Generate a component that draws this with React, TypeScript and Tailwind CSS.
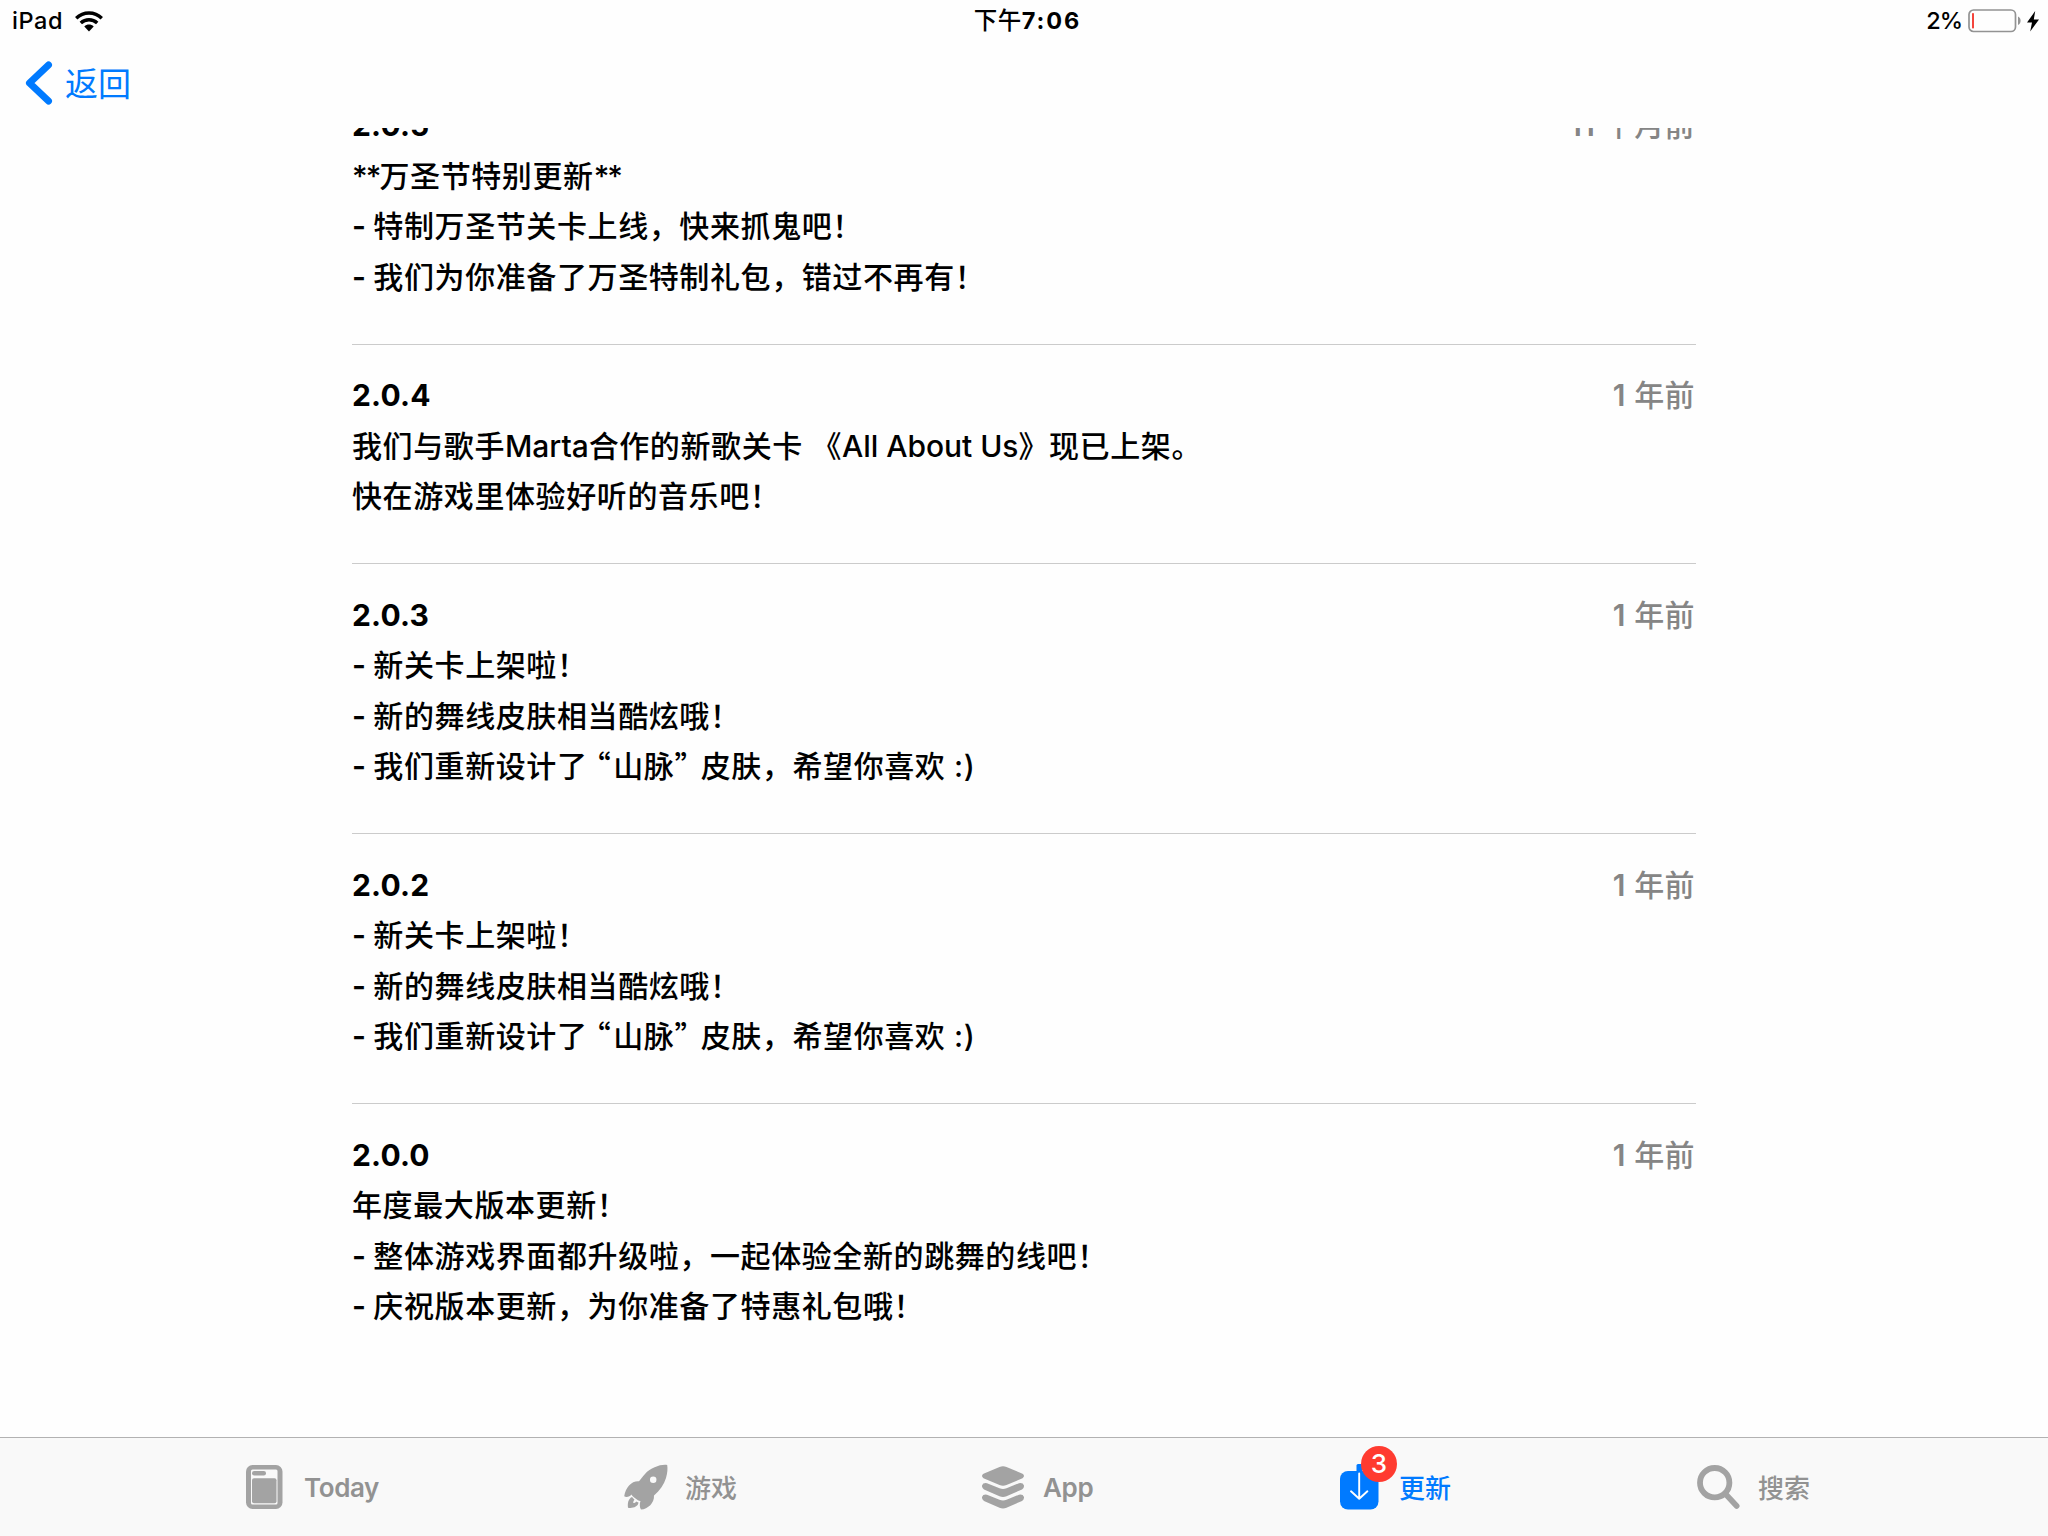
import React from "react";

type Entry = { version: string; age: string; lines: string[] };

const entries: Entry[] = [
  {
    version: "2.0.5",
    age: "11 个月前",
    lines: ["**万圣节特别更新**", "- 特制万圣节关卡上线，快来抓鬼吧！", "- 我们为你准备了万圣特制礼包，错过不再有！"],
  },
  {
    version: "2.0.4",
    age: "1 年前",
    lines: ["我们与歌手Marta合作的新歌关卡 《All About Us》现已上架。", "快在游戏里体验好听的音乐吧！"],
  },
  {
    version: "2.0.3",
    age: "1 年前",
    lines: ["- 新关卡上架啦！", "- 新的舞线皮肤相当酷炫哦！", "- 我们重新设计了 “山脉” 皮肤，希望你喜欢 :)"],
  },
  {
    version: "2.0.2",
    age: "1 年前",
    lines: ["- 新关卡上架啦！", "- 新的舞线皮肤相当酷炫哦！", "- 我们重新设计了 “山脉” 皮肤，希望你喜欢 :)"],
  },
  {
    version: "2.0.0",
    age: "1 年前",
    lines: ["年度最大版本更新！", "- 整体游戏界面都升级啦，一起体验全新的跳舞的线吧！", "- 庆祝版本更新，为你准备了特惠礼包哦！"],
  },
];

function WifiIcon() {
  return (
    <svg width="28" height="21" viewBox="0 0 28 21" fill="none" stroke="#000" strokeWidth="3.4">
      <path d="M1.2 7.2C8.4 .3 19.6 .3 26.8 7.2" />
      <path d="M5.8 12C10.4 7.6 17.6 7.6 22.2 12" />
      <path d="M14 20.4 9.3 15.4C12 13 16 13 18.700 15.4Z" fill="#000" stroke="none" />
    </svg>
  );
}

function StatusBar() {
  return (
    <div className="grid h-10 grid-cols-3 items-center pt-0.5 text-[23.500px] leading-none font-medium text-black">
      <div className="flex items-center pl-3">
        <span className="w-[63px] tracking-[0.6px]">iPad</span>
        <WifiIcon />
      </div>
      <div className="pl-[7px] text-center tracking-[0.5px]">
        下午<span className="font-bold tracking-[1.900px]">7:06</span>
      </div>
      <div className="flex items-center justify-end pr-[9px]">
        <span className="mr-[6px] tracking-[-1px]">2%</span>
        <svg width="54" height="24" viewBox="0 0 54 24" fill="none">
          <rect x="1" y="1" width="46.500" height="21.500" rx="4.500" stroke="#939393" strokeWidth="1.700" />
          <rect x="4" y="4" width="2" height="15.500" rx="0.8" fill="#f4453c" />
          <path d="M50 7.500c3.500 1.600 3.500 7 0 8.600Z" fill="#939393" />
        </svg>
        <svg className="ml-[5px]" width="12" height="21" viewBox="0 0 12 21">
          <path d="M8.200 0 0 11.500h5L3.200 20.500 12 8.600H6.800Z" fill="#000" />
        </svg>
      </div>
    </div>
  );
}

function NavBar() {
  return (
    <div className="flex h-[88px] items-start pt-[21px] pl-[25px] text-[#007aff]">
      <svg width="28" height="46" viewBox="0 0 28 46" fill="none" stroke="#007aff" strokeWidth="7" strokeLinecap="round" strokeLinejoin="round">
        <path d="M23.500 4 4.500 22 23.500 40" />
      </svg>
      <span className="mt-[5px] ml-3 text-[33px] leading-[36px]">返回</span>
    </div>
  );
}

/* Splits a line so that asterisks, dashes, quotes and Latin words get their own spacing. */
function Line({ text }: { text: string }) {
  const parts = text.split(/(\*\*|^- |[“”]|[A-Za-z]+(?: [A-Za-z]+)*)/).filter(Boolean);
  return (
    <p className="h-[50.500px] leading-[50.500px] tracking-[0.6px] whitespace-pre">
      {parts.map((part, i) => {
        if (part === "**") return <span key={i} className="tracking-[-1.900px]">{part}</span>;
        if (part === "- ") return <span key={i} className="font-semibold tracking-[-0.100px]">{part}</span>;
        if (part === "“") return <span key={i} lang="zh-CN" className="mr-[2px] -ml-[15.500px] font-['Noto_Sans_CJK_SC',sans-serif] leading-none">{part}</span>;
        if (part === "”") return <span key={i} lang="zh-CN" className="-mr-[13px] font-['Noto_Sans_CJK_SC',sans-serif] leading-none">{part}</span>;
        if (/^[A-Za-z]/.test(part)) return <span key={i} className="tracking-[-0.050px]">{part}</span>;
        return part;
      })}
    </p>
  );
}

function VersionEntry({ entry }: { entry: Entry }) {
  const [count, ...unit] = entry.age.split(" ");
  return (
    <section className="border-b border-[#cbcbcb] pt-[25.500px] pb-[41.500px] text-[30px] font-medium last:border-b-0">
      <div className="flex items-baseline justify-between leading-[50.500px]">
        <h2 className="font-bold tracking-[0.2px]">{entry.version}</h2>
        <span className="pr-px tracking-[0.4px] text-[#858585]">
          <span className="font-semibold">{count}</span> {unit}
        </span>
      </div>
      {entry.lines.map((line) => (
        <Line key={line} text={line} />
      ))}
    </section>
  );
}

function TodayIcon() {
  return (
    <svg width="37" height="44" viewBox="0 0 37 44">
      <rect width="36.500" height="44" rx="6.500" fill="#a3a3a3" />
      <rect x="5" y="4.500" width="26.500" height="35" rx="1.500" fill="#f9f9f9" />
      <rect x="6" y="6" width="14" height="4.500" rx="2.200" fill="#a3a3a3" />
      <rect x="6" y="13.300" width="24.500" height="25" rx="2" fill="#a3a3a3" />
    </svg>
  );
}

function RocketIcon() {
  return (
    <svg width="44" height="46" viewBox="0 0 44 46">
      <path
        fill="#a3a3a3"
        fillRule="evenodd"
        d="M43.200 1C37 0 27 3.500 21 10 18.500 12.800 16.500 15.500 15 17.200 8 16.500 1.500 23 .2 32.300 2.500 34 6 32.500 7.500 30.500 8 32 14.500 37.500 16.500 37 15.500 39.500 15.500 43.500 17 45.600 24 45 30.500 39 30 31.500 36 26.500 40 20.500 42 14 43.500 9 43.800 4.500 43.200 1ZM29.200 12.400a3.200 3.200 0 1 1 0 6.500 3.200 3.200 0 0 1 0-6.500Z"
      />
      <path fill="#a3a3a3" d="M8 33C4 35 3.500 39.500 4 43.700 8.500 44.500 14 43 14.500 38.500 13.500 38.300 12.800 38 12.200 37.500 11.500 38.800 10.500 39 9.300 39 9.300 37.500 9.500 36.700 10.500 35.800Z" />
    </svg>
  );
}

function StackIcon() {
  return (
    <svg width="43" height="43" viewBox="0 0 43 43" fill="#a3a3a3">
      <path d="M17.500.9Q21 -.5 24.500 .9L40.500 7.800Q43.500 10 40.500 12.200L24.500 19.100Q21 20.500 17.500 19.100L1.500 12.200Q-1.500 10 1.500 7.800Z" />
      <path d="M5 17.200 17.500 22.300Q21 23.700 24.500 22.300L37 17.200Q41 16.500 42 19.500 42.300 22 40 23.500L24.500 30.200Q21 31.600 17.500 30.200L2 23.500Q-.3 22 0 19.500 1 16.500 5 17.200Z" />
      <path d="M5 28.700 17.500 33.800Q21 35.200 24.500 33.800L37 28.700Q41 28 42 31 42.300 33.500 40 35L24.500 41.700Q21 43.100 17.500 41.700L2 35Q-.3 33.500 0 31 1 28 5 28.700Z" />
    </svg>
  );
}

function UpdateIcon() {
  return (
    <span className="relative block h-[46px] w-[39px]">
      <svg width="39" height="46" viewBox="0 0 39 46">
        <rect x="0" y="7" width="38.500" height="38.500" rx="8" fill="#007aff" />
        <path d="M16.500 8.500V1.500Q16.500 0 18 0H22V8.500Z" fill="#007aff" />
        <path d="M19.200 9.500V34.500M11 27.300 19.200 34.800 27.400 27.300" fill="none" stroke="#fff" strokeWidth="1.900" strokeLinecap="round" strokeLinejoin="round" />
      </svg>
      <span className="absolute -top-[18px] left-[21px] flex size-9 items-center justify-center rounded-full bg-[#ff3b30] text-[26px] leading-none font-medium text-white">3</span>
    </span>
  );
}

function SearchIcon() {
  return (
    <svg width="43" height="44" viewBox="0 0 43 44" fill="none" stroke="#a3a3a3">
      <circle cx="17.700" cy="17.700" r="14.700" strokeWidth="5.800" />
      <path d="M29 29.500 39.700 41" strokeWidth="5.600" strokeLinecap="round" />
    </svg>
  );
}

function TabBar() {
  return (
    <nav className="flex h-[99px] shrink-0 items-center border-t border-[#b2b2b2] bg-[#f9f9f9] pl-[246px] text-[26px] leading-none font-medium text-[#929292]">
      <div className="flex w-[378px] items-center gap-[21px]">
        <TodayIcon />
        <span className="pt-0.5 font-semibold tracking-[-0.400px]">Today</span>
      </div>
      <div className="flex w-[358px] items-center gap-[17px]">
        <RocketIcon />
        <span className="pt-[3px]">游戏</span>
      </div>
      <div className="flex w-[358px] items-center gap-[18px]">
        <StackIcon />
        <span className="pt-0.5 font-semibold tracking-[-0.300px]">App</span>
      </div>
      <div className="flex w-[357px] items-center gap-[20px] text-[#007aff]">
        <UpdateIcon />
        <span className="pt-[3px]">更新</span>
      </div>
      <div className="flex items-center gap-[18px]">
        <SearchIcon />
        <span className="pt-[3px]">搜索</span>
      </div>
    </nav>
  );
}

export default function App() {
  return (
    <div className="flex h-[1536px] w-[2048px] flex-col overflow-hidden bg-[#fefefe] font-['Inter','Noto_Sans_CJK_SC',sans-serif] text-black">
      <header className="h-32 shrink-0">
        <StatusBar />
        <NavBar />
      </header>
      <main className="min-h-0 flex-1 overflow-hidden pr-[352px] pl-[352px]">
        <div className="-mt-[53.500px]">
          {entries.map((entry) => (
            <VersionEntry key={entry.version} entry={entry} />
          ))}
        </div>
      </main>
      <TabBar />
    </div>
  );
}
